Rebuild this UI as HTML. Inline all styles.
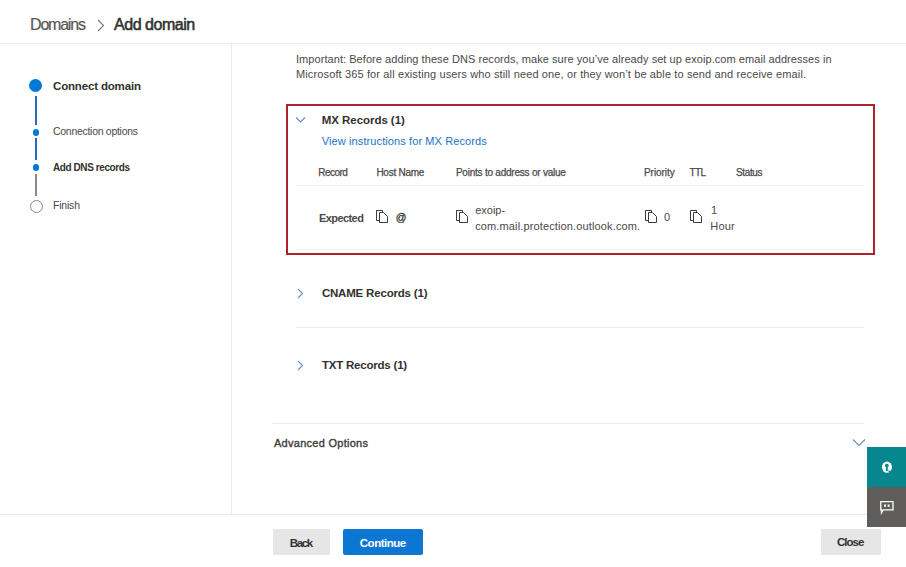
<!DOCTYPE html>
<html><head><meta charset="utf-8"><style>
html,body{margin:0;padding:0;background:#fff;width:906px;height:567px;overflow:hidden;}
body{position:relative;font-family:"Liberation Sans",sans-serif;}
#w{position:absolute;left:0;top:0;width:906px;height:567px;background:#fff;}
.t{position:absolute;white-space:nowrap;}
.r{position:absolute;}
</style></head><body><div id="w">
<div class="t" style="left:30.10px;top:15.82px;font-size:16px;line-height:17.872px;color:#575655;letter-spacing:-1.225px;-webkit-text-stroke:0.2px #575655;">Domains</div>
<svg class="r" style="left:96px;top:18.5px" width="10" height="13" viewBox="0 0 10 13"><path d="M2 1 L7.5 6.5 L2 12" fill="none" stroke="#7a7876" stroke-width="1.1"/></svg>
<div class="t" style="left:114.08px;top:15.82px;font-size:16px;line-height:17.872px;color:#323130;letter-spacing:-0.472px;-webkit-text-stroke:0.55px #323130;">Add domain</div>
<div class="r" style="left:0px;top:43px;width:906px;height:1px;background:#edebe9;"></div>
<div class="r" style="left:231px;top:43px;width:1px;height:471px;background:#edebe9;"></div>
<div class="r" style="left:0px;top:514px;width:906px;height:1px;background:#edebe9;"></div>
<div class="r" style="left:29px;top:79px;width:13px;height:13px;background:#0078d4;border-radius:50%;"></div>
<div class="r" style="left:35px;top:96px;width:2px;height:29px;background:#2b6cb0;"></div>
<div class="r" style="left:32.5px;top:129px;width:6.5px;height:6.5px;background:#0078d4;border-radius:50%;"></div>
<div class="r" style="left:35px;top:138px;width:2px;height:22px;background:#2b6cb0;"></div>
<div class="r" style="left:32.5px;top:164px;width:6.5px;height:6.5px;background:#0078d4;border-radius:50%;"></div>
<div class="r" style="left:35px;top:174px;width:2px;height:22px;background:#8a8886;"></div>
<div class="r" style="left:29.5px;top:199.5px;width:12px;height:12px;background:transparent;border:1.5px solid #8a8886;border-radius:50%;box-sizing:border-box;width:13px;height:13px;"></div>
<div class="t" style="left:53.00px;top:79.59px;font-size:11.5px;line-height:12.845px;color:#323130;font-weight:bold;letter-spacing:-0.162px;">Connect domain</div>
<div class="t" style="left:53.00px;top:125.50px;font-size:10.5px;line-height:11.729px;color:#4a4948;letter-spacing:-0.288px;">Connection options</div>
<div class="t" style="left:53.00px;top:161.55px;font-size:10px;line-height:11.170px;color:#323130;font-weight:bold;letter-spacing:-0.414px;">Add DNS records</div>
<div class="t" style="left:53.00px;top:200.00px;font-size:10.5px;line-height:11.729px;color:#4a4948;letter-spacing:-0.200px;">Finish</div>
<div class="t" style="left:296.00px;top:52.95px;font-size:11px;line-height:12.287px;color:#4a4948;letter-spacing:0.059px;">Important: Before adding these DNS records, make sure you’ve already set up exoip.com email addresses in</div>
<div class="t" style="left:296.00px;top:68.14px;font-size:11px;line-height:12.287px;color:#4a4948;letter-spacing:0.130px;">Microsoft 365 for all existing users who still need one, or they won’t be able to send and receive email.</div>
<div class="r" style="left:286px;top:104px;width:589px;height:151px;background:transparent;border:2px solid #ad2329;box-sizing:border-box;"></div>
<svg class="r" style="left:295px;top:116px" width="11" height="8" viewBox="0 0 11 8"><path d="M1 1.5 L5.5 6 L10 1.5" fill="none" stroke="#6f8fb8" stroke-width="1.1"/></svg>
<div class="t" style="left:321.80px;top:113.79px;font-size:11.5px;line-height:12.845px;color:#323130;font-weight:bold;letter-spacing:-0.054px;">MX Records (1)</div>
<div class="t" style="left:321.80px;top:134.64px;font-size:11px;line-height:12.287px;color:#1a73c8;letter-spacing:0.103px;">View instructions for MX Records</div>
<div class="t" style="left:318.20px;top:167.25px;font-size:10px;line-height:11.170px;color:#4a4948;letter-spacing:-0.510px;-webkit-text-stroke:0.25px #4a4948;">Record</div>
<div class="t" style="left:376.40px;top:167.25px;font-size:10px;line-height:11.170px;color:#4a4948;letter-spacing:-0.250px;-webkit-text-stroke:0.25px #4a4948;">Host Name</div>
<div class="t" style="left:455.90px;top:167.25px;font-size:10px;line-height:11.170px;color:#4a4948;letter-spacing:-0.224px;-webkit-text-stroke:0.25px #4a4948;">Points to address or value</div>
<div class="t" style="left:644.00px;top:167.25px;font-size:10px;line-height:11.170px;color:#4a4948;letter-spacing:-0.057px;-webkit-text-stroke:0.25px #4a4948;">Priority</div>
<div class="t" style="left:689.60px;top:167.25px;font-size:10px;line-height:11.170px;color:#4a4948;letter-spacing:-0.600px;-webkit-text-stroke:0.25px #4a4948;">TTL</div>
<div class="t" style="left:736.00px;top:167.25px;font-size:10px;line-height:11.170px;color:#4a4948;letter-spacing:-0.370px;-webkit-text-stroke:0.25px #4a4948;">Status</div>
<div class="r" style="left:296px;top:185px;width:568px;height:1px;background:#edebe9;"></div>
<div class="r" style="left:296px;top:249px;width:568px;height:1px;background:#f3f2f1;"></div>
<svg class="r" style="left:375px;top:209px" width="14" height="15" viewBox="0 0 14 15"><path d="M4 11.5 H1.5 V1.5 H7.5 V3" fill="none" stroke="#3b3a39" stroke-width="1"/><path d="M4.5 3.5 H8.5 L12.5 7.5 V13.5 H4.5 Z" fill="#fff" stroke="#3b3a39" stroke-width="1"/></svg>
<svg class="r" style="left:455px;top:209px" width="14" height="15" viewBox="0 0 14 15"><path d="M4 11.5 H1.5 V1.5 H7.5 V3" fill="none" stroke="#3b3a39" stroke-width="1"/><path d="M4.5 3.5 H8.5 L12.5 7.5 V13.5 H4.5 Z" fill="#fff" stroke="#3b3a39" stroke-width="1"/></svg>
<svg class="r" style="left:644px;top:209px" width="14" height="15" viewBox="0 0 14 15"><path d="M4 11.5 H1.5 V1.5 H7.5 V3" fill="none" stroke="#3b3a39" stroke-width="1"/><path d="M4.5 3.5 H8.5 L12.5 7.5 V13.5 H4.5 Z" fill="#fff" stroke="#3b3a39" stroke-width="1"/></svg>
<svg class="r" style="left:689px;top:209px" width="14" height="15" viewBox="0 0 14 15"><path d="M4 11.5 H1.5 V1.5 H7.5 V3" fill="none" stroke="#3b3a39" stroke-width="1"/><path d="M4.5 3.5 H8.5 L12.5 7.5 V13.5 H4.5 Z" fill="#fff" stroke="#3b3a39" stroke-width="1"/></svg>
<div class="t" style="left:318.90px;top:211.84px;font-size:11px;line-height:12.287px;color:#4a4948;font-weight:bold;letter-spacing:-0.557px;">Expected</div>
<div class="t" style="left:395.80px;top:212.10px;font-size:10.5px;line-height:11.729px;color:#3b3a39;-webkit-text-stroke:0.35px #3b3a39;">@</div>
<div class="t" style="left:475.20px;top:203.54px;font-size:11px;line-height:12.287px;color:#4a4948;">exoip-</div>
<div class="t" style="left:475.20px;top:219.84px;font-size:11px;line-height:12.287px;color:#4a4948;letter-spacing:0.135px;">com.mail.protection.outlook.com.</div>
<div class="t" style="left:664.00px;top:211.34px;font-size:11px;line-height:12.287px;color:#4a4948;">0</div>
<div class="t" style="left:711.00px;top:203.84px;font-size:11px;line-height:12.287px;color:#4a4948;">1</div>
<div class="t" style="left:710.30px;top:219.54px;font-size:11px;line-height:12.287px;color:#4a4948;letter-spacing:0.150px;">Hour</div>
<svg class="r" style="left:296px;top:288px" width="9" height="11" viewBox="0 0 9 11"><path d="M2 1 L6.5 5.5 L2 10" fill="none" stroke="#6f8fb8" stroke-width="1.1"/></svg>
<div class="t" style="left:321.90px;top:286.89px;font-size:11.5px;line-height:12.845px;color:#323130;font-weight:bold;letter-spacing:-0.191px;">CNAME Records (1)</div>
<div class="r" style="left:296px;top:327px;width:568px;height:1px;background:#edebe9;"></div>
<svg class="r" style="left:296px;top:360px" width="9" height="11" viewBox="0 0 9 11"><path d="M2 1 L6.5 5.5 L2 10" fill="none" stroke="#6f8fb8" stroke-width="1.1"/></svg>
<div class="t" style="left:321.90px;top:359.19px;font-size:11.5px;line-height:12.845px;color:#323130;font-weight:bold;letter-spacing:-0.207px;">TXT Records (1)</div>
<div class="r" style="left:272px;top:423px;width:592px;height:1px;background:#edebe9;"></div>
<div class="t" style="left:274.00px;top:437.44px;font-size:11px;line-height:12.287px;color:#3b3a39;letter-spacing:0.273px;-webkit-text-stroke:0.35px #3b3a39;">Advanced Options</div>
<svg class="r" style="left:852px;top:438px" width="14" height="10" viewBox="0 0 14 10"><path d="M1 1.5 L7 7.5 L13 1.5" fill="none" stroke="#6f8fb8" stroke-width="1.2"/></svg>
<div class="r" style="left:867px;top:447px;width:39px;height:40px;background:#05878d;"></div>
<div class="r" style="left:867px;top:487px;width:39px;height:40px;background:#5f5e5d;"></div>
<svg class="r" style="left:867px;top:447px" width="39" height="80" viewBox="867 447 39 80"><ellipse cx="887" cy="467.2" rx="5" ry="5.6" fill="#fff"/><circle cx="886.8" cy="465.6" r="1.9" fill="#05878d"/><path d="M886 465.5 H887.6 L887.9 471 H885.9 Z" fill="#05878d"/><path d="M887.5 470.5 L891 473.5 L893 471 Z" fill="#05878d"/><path d="M880.8 501.6 H893 V509.8 H883.2 L881.5 512.8 V509.8 H880.8 Z" fill="none" stroke="#fff" stroke-width="1.3"/><rect x="884" y="504.5" width="2" height="2.3" fill="#fff"/><rect x="887.6" y="504.5" width="2" height="2.3" fill="#fff"/></svg>
<div class="r" style="left:273px;top:529px;width:56.5px;height:26px;background:#e6e6e6;border-radius:1px;"></div>
<div class="t" style="left:289.80px;top:536.59px;font-size:11.5px;line-height:12.845px;color:#323130;font-weight:bold;letter-spacing:-1.383px;">Back</div>
<div class="r" style="left:343px;top:529.3px;width:79.5px;height:25.7px;background:#0c77d3;border-radius:2px;"></div>
<div class="t" style="left:359.80px;top:536.79px;font-size:11.5px;line-height:12.845px;color:#ffffff;font-weight:bold;letter-spacing:-0.479px;">Continue</div>
<div class="r" style="left:820.5px;top:529px;width:60.5px;height:26px;background:#e6e6e6;border-radius:1px;"></div>
<div class="t" style="left:836.90px;top:536.49px;font-size:11.5px;line-height:12.845px;color:#323130;font-weight:bold;letter-spacing:-0.950px;">Close</div>
</div></body></html>
